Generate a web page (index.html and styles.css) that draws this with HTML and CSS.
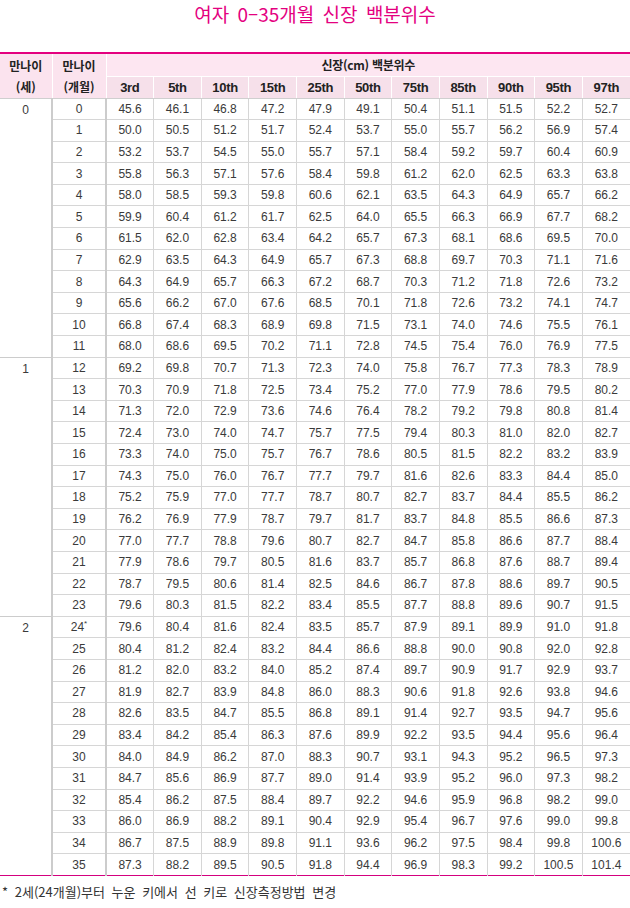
FILE: index.html
```html
<!DOCTYPE html>
<html lang="ko">
<head>
<meta charset="utf-8">
<title>여자 0-35개월 신장 백분위수</title>
<link rel="stylesheet" href="styles.css">
</head>
<body>
<h1 class="title">여자 0–35개월 신장 백분위수</h1>
<table class="grid">
  <colgroup>
    <col class="c-age"><col class="c-mon">
    <col span="11" class="c-val">
  </colgroup>
  <thead>
    <tr class="h1">
      <th rowspan="2" class="hage">만나이<br>(세)</th>
      <th rowspan="2" class="hmon">만나이<br>(개월)</th>
      <th colspan="11" class="hspan">신장(cm) 백분위수</th>
    </tr>
    <tr class="h2">
      <th>3rd</th><th>5th</th><th>10th</th><th>15th</th><th>25th</th><th>50th</th><th>75th</th><th>85th</th><th>90th</th><th>95th</th><th>97th</th>
    </tr>
  </thead>
  <tbody class="grp">
    <tr><td rowspan="12" class="age">0</td><td class="mon">0</td><td>45.6</td><td>46.1</td><td>46.8</td><td>47.2</td><td>47.9</td><td>49.1</td><td>50.4</td><td>51.1</td><td>51.5</td><td>52.2</td><td>52.7</td></tr>
    <tr><td class="mon">1</td><td>50.0</td><td>50.5</td><td>51.2</td><td>51.7</td><td>52.4</td><td>53.7</td><td>55.0</td><td>55.7</td><td>56.2</td><td>56.9</td><td>57.4</td></tr>
    <tr><td class="mon">2</td><td>53.2</td><td>53.7</td><td>54.5</td><td>55.0</td><td>55.7</td><td>57.1</td><td>58.4</td><td>59.2</td><td>59.7</td><td>60.4</td><td>60.9</td></tr>
    <tr><td class="mon">3</td><td>55.8</td><td>56.3</td><td>57.1</td><td>57.6</td><td>58.4</td><td>59.8</td><td>61.2</td><td>62.0</td><td>62.5</td><td>63.3</td><td>63.8</td></tr>
    <tr><td class="mon">4</td><td>58.0</td><td>58.5</td><td>59.3</td><td>59.8</td><td>60.6</td><td>62.1</td><td>63.5</td><td>64.3</td><td>64.9</td><td>65.7</td><td>66.2</td></tr>
    <tr><td class="mon">5</td><td>59.9</td><td>60.4</td><td>61.2</td><td>61.7</td><td>62.5</td><td>64.0</td><td>65.5</td><td>66.3</td><td>66.9</td><td>67.7</td><td>68.2</td></tr>
    <tr><td class="mon">6</td><td>61.5</td><td>62.0</td><td>62.8</td><td>63.4</td><td>64.2</td><td>65.7</td><td>67.3</td><td>68.1</td><td>68.6</td><td>69.5</td><td>70.0</td></tr>
    <tr><td class="mon">7</td><td>62.9</td><td>63.5</td><td>64.3</td><td>64.9</td><td>65.7</td><td>67.3</td><td>68.8</td><td>69.7</td><td>70.3</td><td>71.1</td><td>71.6</td></tr>
    <tr><td class="mon">8</td><td>64.3</td><td>64.9</td><td>65.7</td><td>66.3</td><td>67.2</td><td>68.7</td><td>70.3</td><td>71.2</td><td>71.8</td><td>72.6</td><td>73.2</td></tr>
    <tr><td class="mon">9</td><td>65.6</td><td>66.2</td><td>67.0</td><td>67.6</td><td>68.5</td><td>70.1</td><td>71.8</td><td>72.6</td><td>73.2</td><td>74.1</td><td>74.7</td></tr>
    <tr><td class="mon">10</td><td>66.8</td><td>67.4</td><td>68.3</td><td>68.9</td><td>69.8</td><td>71.5</td><td>73.1</td><td>74.0</td><td>74.6</td><td>75.5</td><td>76.1</td></tr>
    <tr><td class="mon">11</td><td>68.0</td><td>68.6</td><td>69.5</td><td>70.2</td><td>71.1</td><td>72.8</td><td>74.5</td><td>75.4</td><td>76.0</td><td>76.9</td><td>77.5</td></tr>
  </tbody>
  <tbody class="grp">
    <tr><td rowspan="12" class="age">1</td><td class="mon">12</td><td>69.2</td><td>69.8</td><td>70.7</td><td>71.3</td><td>72.3</td><td>74.0</td><td>75.8</td><td>76.7</td><td>77.3</td><td>78.3</td><td>78.9</td></tr>
    <tr><td class="mon">13</td><td>70.3</td><td>70.9</td><td>71.8</td><td>72.5</td><td>73.4</td><td>75.2</td><td>77.0</td><td>77.9</td><td>78.6</td><td>79.5</td><td>80.2</td></tr>
    <tr><td class="mon">14</td><td>71.3</td><td>72.0</td><td>72.9</td><td>73.6</td><td>74.6</td><td>76.4</td><td>78.2</td><td>79.2</td><td>79.8</td><td>80.8</td><td>81.4</td></tr>
    <tr><td class="mon">15</td><td>72.4</td><td>73.0</td><td>74.0</td><td>74.7</td><td>75.7</td><td>77.5</td><td>79.4</td><td>80.3</td><td>81.0</td><td>82.0</td><td>82.7</td></tr>
    <tr><td class="mon">16</td><td>73.3</td><td>74.0</td><td>75.0</td><td>75.7</td><td>76.7</td><td>78.6</td><td>80.5</td><td>81.5</td><td>82.2</td><td>83.2</td><td>83.9</td></tr>
    <tr><td class="mon">17</td><td>74.3</td><td>75.0</td><td>76.0</td><td>76.7</td><td>77.7</td><td>79.7</td><td>81.6</td><td>82.6</td><td>83.3</td><td>84.4</td><td>85.0</td></tr>
    <tr><td class="mon">18</td><td>75.2</td><td>75.9</td><td>77.0</td><td>77.7</td><td>78.7</td><td>80.7</td><td>82.7</td><td>83.7</td><td>84.4</td><td>85.5</td><td>86.2</td></tr>
    <tr><td class="mon">19</td><td>76.2</td><td>76.9</td><td>77.9</td><td>78.7</td><td>79.7</td><td>81.7</td><td>83.7</td><td>84.8</td><td>85.5</td><td>86.6</td><td>87.3</td></tr>
    <tr><td class="mon">20</td><td>77.0</td><td>77.7</td><td>78.8</td><td>79.6</td><td>80.7</td><td>82.7</td><td>84.7</td><td>85.8</td><td>86.6</td><td>87.7</td><td>88.4</td></tr>
    <tr><td class="mon">21</td><td>77.9</td><td>78.6</td><td>79.7</td><td>80.5</td><td>81.6</td><td>83.7</td><td>85.7</td><td>86.8</td><td>87.6</td><td>88.7</td><td>89.4</td></tr>
    <tr><td class="mon">22</td><td>78.7</td><td>79.5</td><td>80.6</td><td>81.4</td><td>82.5</td><td>84.6</td><td>86.7</td><td>87.8</td><td>88.6</td><td>89.7</td><td>90.5</td></tr>
    <tr><td class="mon">23</td><td>79.6</td><td>80.3</td><td>81.5</td><td>82.2</td><td>83.4</td><td>85.5</td><td>87.7</td><td>88.8</td><td>89.6</td><td>90.7</td><td>91.5</td></tr>
  </tbody>
  <tbody class="grp last">
    <tr><td rowspan="12" class="age">2</td><td class="mon">24<sup>*</sup></td><td>79.6</td><td>80.4</td><td>81.6</td><td>82.4</td><td>83.5</td><td>85.7</td><td>87.9</td><td>89.1</td><td>89.9</td><td>91.0</td><td>91.8</td></tr>
    <tr><td class="mon">25</td><td>80.4</td><td>81.2</td><td>82.4</td><td>83.2</td><td>84.4</td><td>86.6</td><td>88.8</td><td>90.0</td><td>90.8</td><td>92.0</td><td>92.8</td></tr>
    <tr><td class="mon">26</td><td>81.2</td><td>82.0</td><td>83.2</td><td>84.0</td><td>85.2</td><td>87.4</td><td>89.7</td><td>90.9</td><td>91.7</td><td>92.9</td><td>93.7</td></tr>
    <tr><td class="mon">27</td><td>81.9</td><td>82.7</td><td>83.9</td><td>84.8</td><td>86.0</td><td>88.3</td><td>90.6</td><td>91.8</td><td>92.6</td><td>93.8</td><td>94.6</td></tr>
    <tr><td class="mon">28</td><td>82.6</td><td>83.5</td><td>84.7</td><td>85.5</td><td>86.8</td><td>89.1</td><td>91.4</td><td>92.7</td><td>93.5</td><td>94.7</td><td>95.6</td></tr>
    <tr><td class="mon">29</td><td>83.4</td><td>84.2</td><td>85.4</td><td>86.3</td><td>87.6</td><td>89.9</td><td>92.2</td><td>93.5</td><td>94.4</td><td>95.6</td><td>96.4</td></tr>
    <tr><td class="mon">30</td><td>84.0</td><td>84.9</td><td>86.2</td><td>87.0</td><td>88.3</td><td>90.7</td><td>93.1</td><td>94.3</td><td>95.2</td><td>96.5</td><td>97.3</td></tr>
    <tr><td class="mon">31</td><td>84.7</td><td>85.6</td><td>86.9</td><td>87.7</td><td>89.0</td><td>91.4</td><td>93.9</td><td>95.2</td><td>96.0</td><td>97.3</td><td>98.2</td></tr>
    <tr><td class="mon">32</td><td>85.4</td><td>86.2</td><td>87.5</td><td>88.4</td><td>89.7</td><td>92.2</td><td>94.6</td><td>95.9</td><td>96.8</td><td>98.2</td><td>99.0</td></tr>
    <tr><td class="mon">33</td><td>86.0</td><td>86.9</td><td>88.2</td><td>89.1</td><td>90.4</td><td>92.9</td><td>95.4</td><td>96.7</td><td>97.6</td><td>99.0</td><td>99.8</td></tr>
    <tr><td class="mon">34</td><td>86.7</td><td>87.5</td><td>88.9</td><td>89.8</td><td>91.1</td><td>93.6</td><td>96.2</td><td>97.5</td><td>98.4</td><td>99.8</td><td>100.6</td></tr>
    <tr><td class="mon">35</td><td>87.3</td><td>88.2</td><td>89.5</td><td>90.5</td><td>91.8</td><td>94.4</td><td>96.9</td><td>98.3</td><td>99.2</td><td>100.5</td><td>101.4</td></tr>
  </tbody>
</table>
<p class="note">* 2세(24개월)부터 누운 키에서 선 키로 신장측정방법 변경</p>
</body>
</html>
```

FILE: styles.css
```css
html, body {
  margin: 0;
  padding: 0;
  background: #ffffff;
}

body {
  width: 630px;
  font-family: "Liberation Sans", "Noto Sans CJK KR", sans-serif;
  color: #333333;
}

.title {
  margin: 0;
  height: 52px;
  padding-top: 1px;
  box-sizing: border-box;
  text-align: center;
  font-family: "Noto Sans CJK KR", sans-serif;
  font-weight: 400;
  font-size: 19px;
  line-height: 26px;
  word-spacing: 3px;
  color: #e4007f;
}

.grid {
  width: 630px;
  border-collapse: collapse;
  table-layout: fixed;
  border-top: 2px solid #e4007f;
  border-bottom: 1px solid #d4007f;
}

.c-age { width: 52px; }
.c-mon { width: 54px; }

.grid th {
  font-family: "Liberation Sans", "Noto Sans CJK KR", sans-serif;
  font-weight: bold;
  font-size: 13px;
  letter-spacing: -0.3px;
  color: #222222;
  padding: 0;
  border: 1px solid #ffffff;
  border-top: none;
}

.grid th:first-child { border-left: none; }
.grid .h2 th:last-child, .grid .hspan { border-right: none; }

.hage, .hmon {
  background: #fbe3ee;
  font-family: "Noto Sans CJK KR", sans-serif !important;
  font-size: 12px !important;
  letter-spacing: 0 !important;
  line-height: 21px;
  vertical-align: top;
  padding-top: 1px !important;
}

.h1 { height: 23px; }
.h2 { height: 22px; }

.hspan {
  background: #fde6f1;
  font-family: "Noto Sans CJK KR", sans-serif !important;
  font-size: 12px !important;
  letter-spacing: -0.2px;
}

.h2 th {
  background: #f6e0ea;
  border-bottom: 1px solid #cfcfcf;
}

.grid .hage, .grid .hmon { border-bottom: 1px solid #cfcfcf; }

.grid td {
  height: 20.6px;
  padding: 0;
  text-align: center;
  font-size: 12px;
  line-height: 14px;
  color: #3a3a3a;
  border-left: 1px solid #d6d6d6;
  border-bottom: 1px solid #d6d6d6;
}

.grid td.age {
  vertical-align: top;
  padding-top: 4px;
  border-left: none;
  border-right: 2px solid #cccccc;
  border-bottom: 1px solid #cccccc;
}

.grid td.mon {
  border-left: 2px solid #cccccc;
  border-right: 2px solid #cccccc;
}

.grp.last tr:last-child td { border-bottom: none; }
.grp.last td.age { border-bottom: none; }

.mon sup {
  font-size: 8px;
  line-height: 0;
  vertical-align: 5px;
}

.note {
  margin: 7px 0 0 2px;
  font-family: "Noto Sans CJK KR", sans-serif;
  font-size: 13px;
  line-height: 17px;
  color: #333333;
  word-spacing: 3px;
}
```
